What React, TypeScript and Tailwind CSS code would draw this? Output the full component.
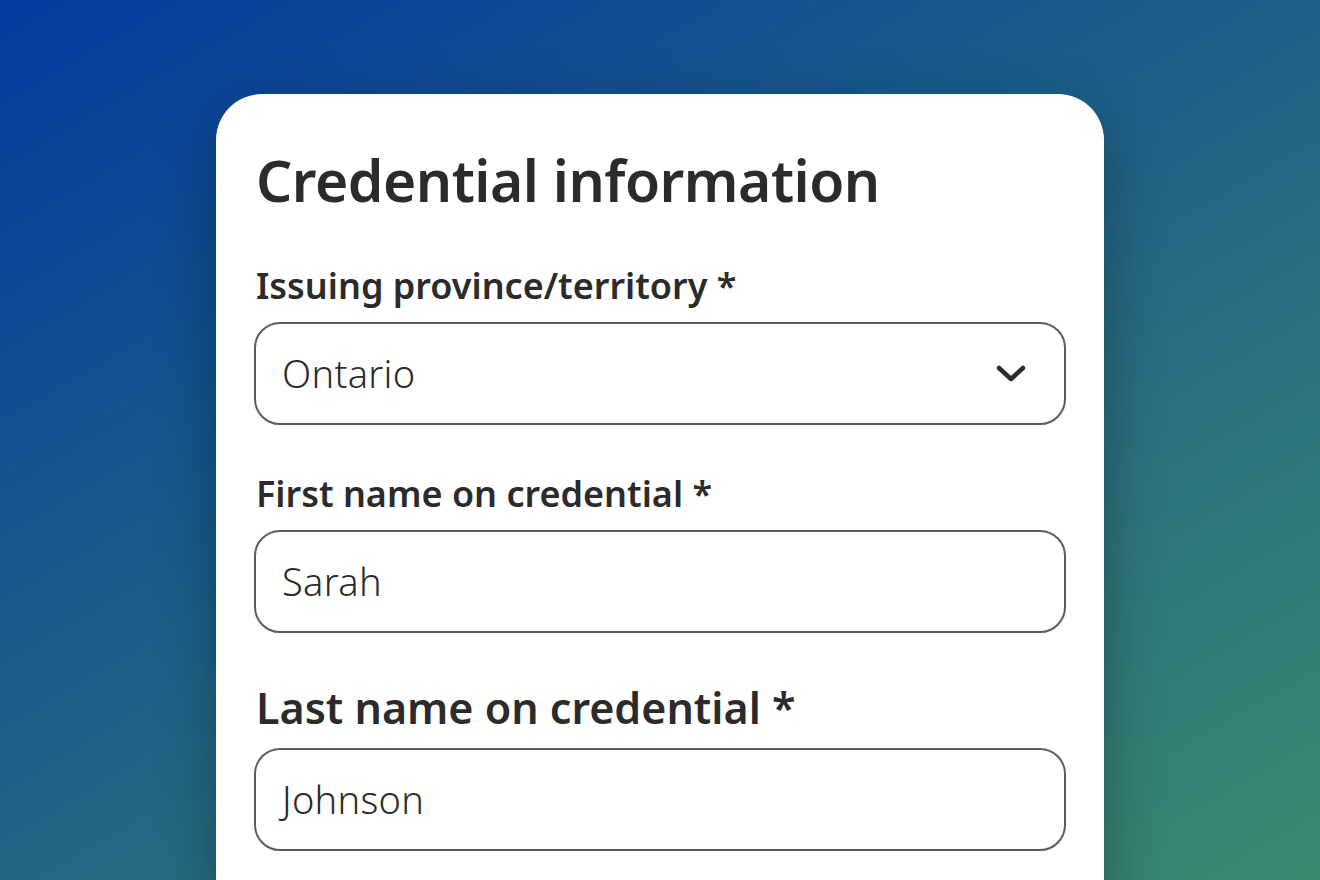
const fields = [
  { label: "Issuing province/territory *", value: "Ontario", select: true, big: false, gap: "mt-0" },
  { label: "First name on credential *", value: "Sarah", select: false, big: false, gap: "mt-[45px]" },
  { label: "Last name on credential *", value: "Johnson", select: false, big: true, gap: "mt-[47px]" },
];

function Chevron() {
  return (
    <svg width="30" height="18" viewBox="0 0 30 18" fill="none" className="shrink-0">
      <path d="M3 3l12 11L27 3" stroke="#2b2b2b" strokeWidth="4.5" strokeLinecap="round" strokeLinejoin="round" />
    </svg>
  );
}

export default function App() {
  return (
    <div
      className="h-[880px] w-full overflow-hidden bg-[linear-gradient(150deg,#053a9f_0%,#1a5b8a_40%,#2a7080_65%,#3a8a70_100%)]"
      style={{ fontFamily: '"Noto Sans", "Open Sans", sans-serif' }}
    >
      <div className="ml-[216px] mt-[94px] w-[888px] h-[900px] rounded-t-[46px] bg-white px-[38px] pt-[46px] shadow-[0_20px_60px_rgba(0,0,0,0.3)] text-[#2b2b2b]">
        <h1 className="pl-[2px] text-[57px] leading-[80px] font-semibold tracking-[-0.5px]">Credential information</h1>

        <div className="mt-[42px] flex flex-col">
          {fields.map((f) => (
            <div key={f.label} className={f.gap}>
              <label
                className={
                  f.big
                    ? "block pl-[2px] text-[43px] leading-[56px] font-semibold"
                    : "block pl-[2px] text-[36px] leading-[48px] font-semibold"
                }
              >
                {f.label}
              </label>
              <div className="mt-[12px] flex h-[103px] items-center justify-between rounded-[26px] border-2 border-[#5c5c5c] pl-[26px] pr-[38px]">
                <span className="text-[38px] font-light tracking-[0.3px] text-[#2b2b2b]">{f.value}</span>
                {f.select && <Chevron />}
              </div>
            </div>
          ))}
        </div>
      </div>
    </div>
  );
}
